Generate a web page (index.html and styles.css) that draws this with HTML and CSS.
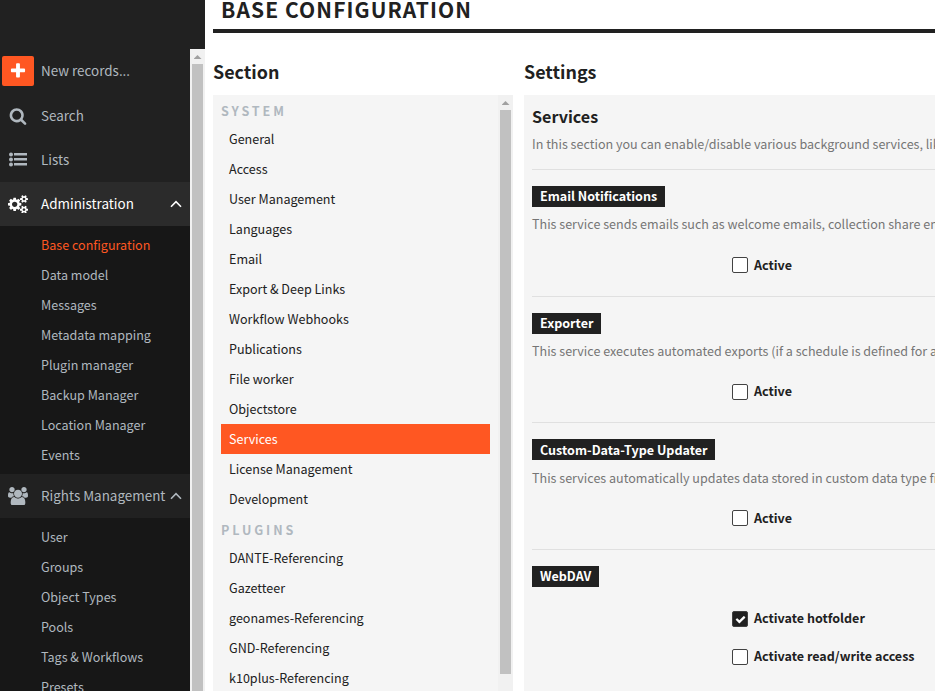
FILE: index.html
```html
<!DOCTYPE html>
<html lang="en">
<head>
<meta charset="utf-8">
<title>Base configuration</title>
<link rel="stylesheet" href="styles.css">
</head>
<body>
<div class="app">
  <aside class="sidebar">
    <nav class="menu">
      <a class="entry entry-new"><span class="icon new-button"><svg width="18" height="18" viewBox="0 0 1792 1792"><path d="M1600 736v192q0 40-28 68t-68 28h-416v416q0 40-28 68t-68 28h-192q-40 0-68-28t-28-68v-416h-416q-40 0-68-28t-28-68v-192q0-40 28-68t68-28h416v-416q0-40 28-68t68-28h192q40 0 68 28t28 68v416h416q40 0 68 28t28 68z"/></svg></span><span class="label">New records...</span></a>
      <a class="entry"><span class="icon"><svg width="18" height="18" viewBox="0 0 1792 1792"><path d="M1216 832q0-185-131.5-316.5t-316.5-131.5-316.5 131.5-131.5 316.5 131.5 316.5 316.5 131.5 316.5-131.5 131.5-316.5zm512 832q0 52-38 90t-90 38q-54 0-90-38l-343-342q-179 124-399 124-143 0-273.5-55.5t-225-150-150-225-55.5-273.5 55.5-273.5 150-225 225-150 273.5-55.5 273.5 55.5 225 150 150 225 55.5 273.5q0 220-124 399l343 343q37 37 37 90z"/></svg></span><span class="label">Search</span></a>
      <a class="entry"><span class="icon"><svg width="18" height="18" viewBox="0 0 18 18"><circle cx="2" cy="3.500" r="2"/><circle cx="2" cy="8.500" r="2"/><circle cx="2" cy="13.500" r="2"/><path d="M5 2h13v2.500H5zM5 7h13v2.500H5zM5 12h13v2.500H5z"/></svg></span><span class="label">Lists</span></a>
      <a class="entry entry-active"><span class="icon"><svg width="20" height="18.67" viewBox="0 0 1920 1792"><path d="M896 896q0-106-75-181t-181-75-181 75-75 181 75 181 181 75 181-75 75-181zm768 512q0-52-38-90t-90-38-90 38-38 90q0 53 37.5 90.5t90.5 37.5 90.5-37.5 37.5-90.5zm0-1024q0-52-38-90t-90-38-90 38-38 90q0 53 37.5 90.5t90.5 37.5 90.5-37.5 37.5-90.5zm-384 421v185q0 10-7 19.5t-16 10.5l-155 24q-11 35-32 76 34 48 90 115 7 11 7 20 0 12-7 19-23 30-82.5 89.5t-78.5 59.5q-11 0-21-7l-115-90q-37 19-77 31-11 108-23 155-7 24-30 24h-186q-11 0-20-7.5t-10-17.5l-23-153q-34-10-75-31l-118 89q-7 7-20 7-11 0-21-8-144-133-144-160 0-9 7-19 10-14 41-53t47-61q-23-44-35-82l-152-24q-10-1-17-9.5t-7-19.5v-185q0-10 7-19.5t16-10.5l155-24q11-35 32-76-34-48-90-115-7-11-7-20 0-12 7-20 22-30 82-89t79-59q11 0 21 7l115 90q34-18 77-32 11-108 23-154 7-24 30-24h186q11 0 20 7.5t10 17.5l23 153q34 10 75 31l118-89q8-7 20-7 11 0 21 8 144 133 144 160 0 8-7 19-12 16-42 54t-45 60q23 48 34 82l152 23q10 2 17 10.5t7 19.5zm640 533v140q0 16-149 31-12 27-30 52 51 113 51 138 0 4-4 7-122 71-124 71-8 0-46-47t-52-68q-20 2-30 2t-30-2q-14 21-52 68t-46 47q-2 0-124-71-4-3-4-7 0-25 51-138-18-25-30-52-149-15-149-31v-140q0-16 149-31 13-29 30-52-51-113-51-138 0-4 4-7 4-2 35-20t59-34 30-16q8 0 46 46.5t52 67.5q20-2 30-2t30 2q51-71 92-112l6-2q4 0 124 70 4 3 4 7 0 25-51 138 17 23 30 52 149 15 149 31zm0-1024v140q0 16-149 31-12 27-30 52 51 113 51 138 0 4-4 7-122 71-124 71-8 0-46-47t-52-68q-20 2-30 2t-30-2q-14 21-52 68t-46 47q-2 0-124-71-4-3-4-7 0-25 51-138-18-25-30-52-149-15-149-31v-140q0-16 149-31 13-29 30-52-51-113-51-138 0-4 4-7 4-2 35-20t59-34 30-16q8 0 46 46.5t52 67.5q20-2 30-2t30 2q51-71 92-112l6-2q4 0 124 70 4 3 4 7 0 25-51 138 17 23 30 52 149 15 149 31z"/></svg></span><span class="label">Administration</span><svg class="chevron" width="12" height="8" viewBox="0 0 12 8"><path d="M1 6.8 6 1.7l5 5.1"/></svg></a>
      <div class="submenu">
        <a class="current">Base configuration</a>
        <a>Data model</a>
        <a>Messages</a>
        <a>Metadata mapping</a>
        <a>Plugin manager</a>
        <a>Backup Manager</a>
        <a>Location Manager</a>
        <a>Events</a>
      </div>
      <a class="entry"><span class="icon"><svg width="20" height="18.67" viewBox="0 0 1920 1792"><path d="M593 896q-162 5-265 128h-134q-82 0-138-40.5t-56-118.5q0-353 124-353 6 0 43.500 21t97.500 42.500 119 21.500q67 0 133-23-5 37-5 66 0 139 81 256zm1071 637q0 120-73 189.500t-194 69.500h-874q-121 0-194-69.500t-73-189.500q0-53 3.500-103.500t14-109 26.500-108.500 43-97.500 62-81 85.500-53.500 111.500-20q10 0 43 21.500t73 48 107 48 135 21.500 135-21.500 107-48 73-48 43-21.500q61 0 111.500 20t85.500 53.500 62 81 43 97.500 26.500 108.500 14 109 3.500 103.500zm-1024-1277q0 106-75 181t-181 75-181-75-75-181 75-181 181-75 181 75 75 181zm704 384q0 159-112.500 271.500t-271.500 112.500-271.500-112.500-112.500-271.500 112.500-271.500 271.500-112.500 271.500 112.500 112.500 271.500zm576 225q0 78-56 118.500t-138 40.500h-134q-103-123-265-128 81-117 81-256 0-29-5-66 66 23 133 23 59 0 119-21.500t97.500-42.500 43.500-21q124 0 124 353zm-128-609q0 106-75 181t-181 75-181-75-75-181 75-181 181-75 181 75 75 181z"/></svg></span><span class="label">Rights Management</span><svg class="chevron" width="12" height="8" viewBox="0 0 12 8"><path d="M1 6.800 6 1.700l5 5.100"/></svg></a>
      <div class="submenu">
        <a>User</a>
        <a>Groups</a>
        <a>Object Types</a>
        <a>Pools</a>
        <a>Tags &amp; Workflows</a>
        <a>Presets</a>
      </div>
    </nav>
    <div class="scrollbar"><span class="arrow"></span><span class="thumb"></span></div>
  </aside>
  <main class="main">
    <h1>BASE CONFIGURATION</h1>
    <div class="columns">
      <section class="column-section">
        <h2>Section</h2>
        <div class="panel panel-section">
          <div class="list">
            <h3>SYSTEM</h3>
            <a>General</a>
            <a>Access</a>
            <a>User Management</a>
            <a>Languages</a>
            <a>Email</a>
            <a>Export &amp; Deep Links</a>
            <a>Workflow Webhooks</a>
            <a>Publications</a>
            <a>File worker</a>
            <a>Objectstore</a>
            <a class="selected">Services</a>
            <a>License Management</a>
            <a>Development</a>
            <h3>PLUGINS</h3>
            <a>DANTE-Referencing</a>
            <a>Gazetteer</a>
            <a>geonames-Referencing</a>
            <a>GND-Referencing</a>
            <a>k10plus-Referencing</a>
          </div>
          <div class="scrollbar"><span class="arrow"></span><span class="thumb thumb-short"></span></div>
        </div>
      </section>
      <section class="column-settings">
        <h2>Settings</h2>
        <div class="panel panel-settings">
          <h4>Services</h4>
          <p>In this section you can enable/disable various background services, like</p>
          <div class="group">
            <span class="tag">Email Notifications</span>
            <p>This service sends emails such as welcome emails, collection share emails</p>
            <label class="option"><span class="box"></span>Active</label>
          </div>
          <div class="group group-short">
            <span class="tag">Exporter</span>
            <p>This service executes automated exports (if a schedule is defined for an</p>
            <label class="option"><span class="box"></span><span class="raised">Active</span></label>
          </div>
          <div class="group group-updater">
            <span class="tag">Custom-Data-Type Updater</span>
            <p>This services automatically updates data stored in custom data type fields</p>
            <label class="option"><span class="box"></span>Active</label>
          </div>
          <div class="group group-webdav">
            <span class="tag">WebDAV</span>
            <label class="option"><span class="box checked"><svg width="11" height="11" viewBox="0 0 1792 1792"><path d="M1671 566q0 40-28 68l-724 724-136 136q-28 28-68 28t-68-28l-136-136-362-362q-28-28-28-68t28-68l136-136q28-28 68-28t68 28l294 295 656-657q28-28 68-28t68 28l136 136q28 28 28 68z"/></svg></span><span class="raised">Activate hotfolder</span></label>
            <label class="option"><span class="box"></span><span class="raised">Activate read/write access</span></label>
          </div>
        </div>
      </section>
    </div>
  </main>
</div>
</body>
</html>
```
FILE: styles.css
```css
* { box-sizing: border-box; }

body {
  margin: 0;
  overflow: hidden;
  background: #fff;
  color: #212121;
  font: 12.55px/30px "Noto Sans CJK SC", "Noto Sans", sans-serif;
}

h1, h2, h3, h4, p { margin: 0; white-space: nowrap; }
a { display: block; white-space: nowrap; }
svg { display: block; fill: currentColor; }

.app { display: flex; width: 935px; height: 691px; overflow: hidden; }

.sidebar {
  display: flex;
  flex: 0 0 205px;
  padding-top: 49px;
  background: #212121;
  color: #b0b8bf;
}
.menu { width: 190px; overflow: hidden; }
.entry {
  display: flex;
  align-items: center;
  height: 44px;
  font-size: 13.45px;
}
.entry .label { padding-bottom: 2px; }
.entry-new { height: 45px; padding-bottom: 1px; }
.entry-active { background: #2b2b2b; color: #fff; }
.icon {
  display: flex;
  align-items: center;
  justify-content: center;
  width: 36px;
  margin-right: 5px;
}
.new-button {
  width: 32px;
  height: 30px;
  margin: 0 7px 0 2px;
  border-radius: 2px;
  background: #ff5722;
  color: #fff;
}
.chevron {
  margin: 0 8px 1px auto;
  fill: none;
  stroke: currentColor;
  stroke-width: 1.6;
}
.submenu { padding: 4px 0 4px 41px; background: #171717; }
.submenu .current { color: #ff5722; }

.scrollbar {
  display: flex;
  flex: 0 0 15px;
  flex-direction: column;
  align-items: center;
  background: #f1f1f1;
}
.arrow {
  width: 8px;
  height: 4px;
  margin: 6px 0 5px;
  background: #a0a0a0;
  clip-path: polygon(50% 0, 100% 100%, 0 100%);
}
.thumb { flex: 1; width: 11px; background: #c1c1c1; }
.thumb-short { margin-bottom: 17px; }

.main { flex: 1; min-width: 0; padding-left: 8px; }
h1 {
  height: 33px;
  padding-left: 8px;
  border-bottom: 4px solid #212121;
  font-size: 21px;
  line-height: 18px;
  letter-spacing: 1.1px;
}
.columns { display: flex; gap: 11px; }
.column-section { flex: 0 0 300px; }
.column-settings { flex: 1; min-width: 0; }
h2 { height: 62px; padding-top: 23px; font-size: 17.9px; }
.panel { height: 596px; overflow: hidden; background: #f5f5f5; }
.panel-section { display: flex; }
.list { width: 285px; padding: 0 8px; }
.list a { padding-left: 8px; }
.list .selected { background: #ff5722; color: #fff; }
h3 {
  height: 29px;
  color: #b0b8bf;
  font-size: 12.55px;
  line-height: 32px;
  letter-spacing: 2.9px;
}

.panel-settings { padding: 6px 0 0 8px; }
h4 { height: 31px; font-size: 16.1px; }
p { height: 24px; color: #757575; line-height: 24px; }
.group {
  display: flex;
  flex-direction: column;
  align-items: flex-start;
  width: 600px;
  height: 127px;
  padding-top: 16px;
  border-top: 1px solid #e0e0e0;
}
h4 + p { height: 37px; }
.group-short { height: 126px; }
.group-updater p { line-height: 26px; }
.tag {
  height: 21px;
  margin-bottom: 5px;
  padding: 0 8px;
  background: #212121;
  color: #fff;
  font-weight: bold;
  line-height: 19px;
}
.group-updater .tag { line-height: 21px; }
.option {
  display: flex;
  align-items: center;
  gap: 6px;
  height: 16px;
  margin: 21px 0 0 200px;
  font-weight: bold;
}
.raised { padding-bottom: 2px; }
.box {
  display: flex;
  align-items: center;
  justify-content: center;
  width: 16px;
  height: 16px;
  border: 1px solid #424242;
  border-radius: 2px;
  background: #fff;
}
.checked { background: #212121; color: #fff; }
.group-webdav .option { margin-top: 22px; }
.group-webdav .tag { margin-bottom: 2px; }
```
